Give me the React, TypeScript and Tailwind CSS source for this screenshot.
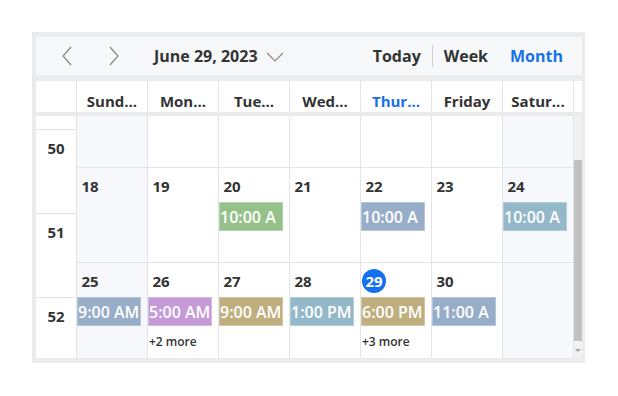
import React from 'react'

type Ev = { time: string; color: string }
type Day = { n?: string; events?: Ev[]; more?: string; today?: boolean }

const BLUE = '#98adc8'
const TEAL = '#93b8c8'
const TAN = '#bfae7e'

const weekRow: Day[] = [
  { n: '18' },
  { n: '19' },
  { n: '20', events: [{ time: '10:00 A', color: '#96c18b' }] },
  { n: '21' },
  { n: '22', events: [{ time: '10:00 A', color: BLUE }] },
  { n: '23' },
  { n: '24', events: [{ time: '10:00 A', color: TEAL }] },
]

const lastRow: Day[] = [
  { n: '25', events: [{ time: '9:00 AM', color: BLUE }] },
  { n: '26', events: [{ time: '5:00 AM', color: '#c59ad8' }], more: '+2 more' },
  { n: '27', events: [{ time: '9:00 AM', color: TAN }] },
  { n: '28', events: [{ time: '1:00 PM', color: TEAL }] },
  { n: '29', events: [{ time: '6:00 PM', color: TAN }], more: '+3 more', today: true },
  { n: '30', events: [{ time: '11:00 A', color: BLUE }] },
  {},
]

const headers = ['Sund...', 'Mon...', 'Tue...', 'Wed...', 'Thur...', 'Friday', 'Satur...']

const DayCell = ({ day, i }: { day: Day; i: number }) => {
  const weekend = i === 0 || i === 6
  return (
    <div className={`w-[71px] shrink-0 border-r border-[#e3e4e6] overflow-hidden pt-[6px] ${weekend ? 'bg-[#f6f8fb]' : 'bg-white'}`}>
      {day.n && (
        <div
          className={`ml-[1px] w-[24px] h-[24px] rounded-full flex items-center justify-center text-[15px] font-bold ${
            day.today ? 'bg-[#1570ef] text-white' : 'text-[#333]'
          }`}
        >
          {day.n}
        </div>
      )}
      {day.events?.map((e) => (
        <div
          key={e.time}
          className="mt-[4px] w-[64px] h-[29px] overflow-hidden whitespace-nowrap text-white text-[16px] font-semibold leading-[29px] border border-white/30"
          style={{ backgroundColor: e.color }}
        >
          {e.time}
        </div>
      ))}
      {day.more && (
        <div className="mt-[8px] ml-[1px] text-[12px] font-semibold leading-[16px] text-[#333]">{day.more}</div>
      )}
    </div>
  )
}

const Chevron = ({ dir }: { dir: 'left' | 'right' }) => (
  <svg width={24} height={20} viewBox="0 0 24 20" fill="none">
    <polyline
      points={dir === 'left' ? '16,1 8,10 16,19' : '8,1 16,10 8,19'}
      stroke="#8a8a8a"
      strokeWidth={1.3}
    />
  </svg>
)

export default function App() {
  return (
    <div className="min-h-screen bg-white pt-[32px] pl-[32px]" style={{ fontFamily: '"Open Sans", sans-serif' }}>
      <div className="w-[553px] h-[331px] bg-[#ebebeb] pt-[5px] pl-[4px] pr-[3px] flex flex-col">
        {/* Toolbar */}
        <div className="h-[38px] bg-[#f7f8fa] flex items-center text-[#333]">
          <div className="ml-[19px]">
            <Chevron dir="left" />
          </div>
          <div className="ml-[23px]">
            <Chevron dir="right" />
          </div>
          <span className="ml-[28px] text-[16px] font-bold">June 29, 2023</span>
          <svg width={18} height={10} viewBox="0 0 18 10" fill="none" className="ml-[8px] mt-[2px]">
            <polyline points="1,1 9,9 17,1" stroke="#8a8a8a" strokeWidth={1.2} />
          </svg>
          <div className="ml-auto flex items-center text-[16px] font-bold pr-[19px]">
            <span>Today</span>
            <span className="mx-[11px] w-px h-[22px] bg-[#cfcfcf]" />
            <span>Week</span>
            <span className="ml-[22px] text-[#1672e6]">Month</span>
          </div>
        </div>

        {/* Day headers */}
        <div className="mt-[6px] h-[31px] flex bg-white">
          <div className="w-[41px] shrink-0 border-r border-[#e3e4e6]" />
          {headers.map((h) => (
            <div
              key={h}
              className={`w-[71px] shrink-0 border-r border-[#e3e4e6] flex items-end justify-center pb-[1px] text-[15px] font-bold leading-[20px] ${
                h === 'Thur...' ? 'text-[#1672e6]' : 'text-[#333]'
              }`}
            >
              {h}
            </div>
          ))}
          <div className="flex-1" />
        </div>

        {/* Body */}
        <div className="mt-[4px] h-[242px] flex bg-white overflow-hidden">
          <div className="w-[41px] shrink-0 border-r border-[#e3e4e6] flex flex-col text-[15px] font-bold text-[#333]">
            <div className="h-[14px] shrink-0 border-b border-[#e3e4e6]" />
            {['50', '51', '52'].map((w) => (
              <div key={w} className="h-[84px] shrink-0 border-b border-[#e3e4e6] pt-[8px] text-center leading-[20px]">
                {w}
              </div>
            ))}
          </div>

          <div className="flex flex-col">
            <div className="h-[52px] flex border-b border-[#e3e4e6]">
              {Array.from({ length: 7 }).map((_, i) => (
                <DayCell key={i} day={{}} i={i} />
              ))}
            </div>
            <div className="h-[95px] flex border-b border-[#e3e4e6]">
              {weekRow.map((d, i) => (
                <DayCell key={i} day={d} i={i} />
              ))}
            </div>
            <div className="h-[95px] flex">
              {lastRow.map((d, i) => (
                <DayCell key={i} day={d} i={i} />
              ))}
            </div>
          </div>

          {/* Scrollbar */}
          <div className="w-[8px] shrink-0 bg-[#f1f1f1] flex flex-col items-center">
            <div className="h-[44px] shrink-0" />
            <div className="w-full h-[181px] bg-[#c1c1c1]" />
            <div className="mt-[8px] w-0 h-0 border-l-[3px] border-r-[3px] border-t-[3px] border-l-transparent border-r-transparent border-t-[#a3a3a3]" />
          </div>
        </div>
      </div>
    </div>
  )
}
